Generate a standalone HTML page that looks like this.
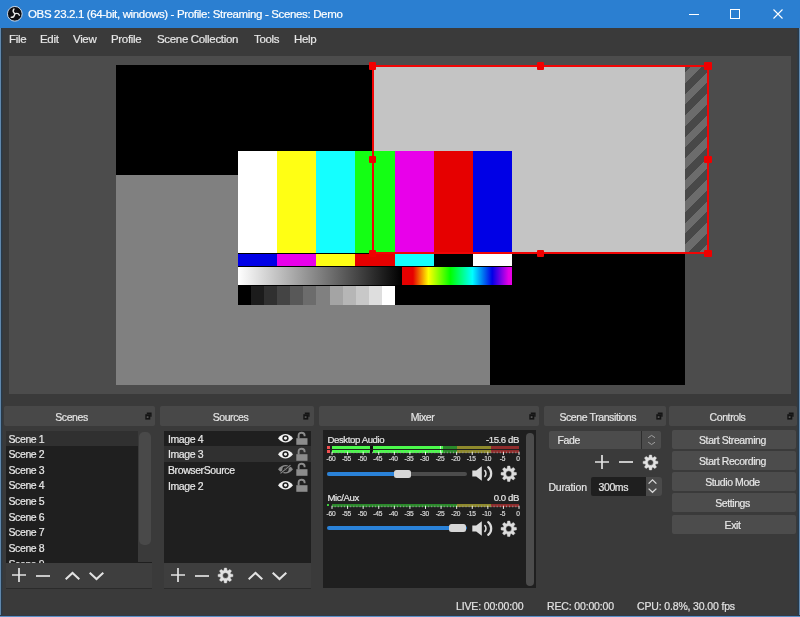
<!DOCTYPE html>
<html>
<head>
<meta charset="utf-8">
<title>OBS</title>
<style>
*{box-sizing:border-box;margin:0;padding:0}
html,body{width:800px;height:617px;overflow:hidden;background:#3a3a3a}
body{position:relative;font-family:"Liberation Sans",sans-serif;color:#e1e1e1;font-size:10.5px;letter-spacing:-0.4px}
.abs{position:absolute}
#win{position:absolute;left:0;top:0;width:800px;height:617px;background:#3a3a3a;overflow:hidden;will-change:transform;-webkit-text-stroke:0.2px currentColor}
#frameL{left:0;top:28px;width:2.6px;height:589px;background:linear-gradient(90deg,#6088ad 0,#6088ad 1px,#24384b 1px,#2a3a48 2px,#343a40 2.6px)}
#frameR{left:797.2px;top:28px;width:2.8px;height:589px;background:linear-gradient(270deg,#6088ad 0,#6088ad 1px,#24384b 1px,#2a3a48 2px,#343a40 2.8px)}
#frameB{left:0;top:615px;width:800px;height:2px;background:linear-gradient(0deg,#5b8fc7 0,#5b8fc7 1px,#2c3a4a 1px,#38393c 2px)}
#title{left:0;top:0;width:800px;height:28px;background:#2b7fd1}
#title .t{left:28px;top:0;height:28px;line-height:28px;font-size:11.5px;color:#fff;white-space:nowrap;letter-spacing:-0.35px}
#menu{left:1px;top:28px;width:798px;height:24px;background:#3a3a3a}
#menu span{position:absolute;top:0;height:22px;line-height:22px;font-size:11.5px;color:#e6e6e6;white-space:nowrap;letter-spacing:-0.33px}
#preview{left:9px;top:56px;width:782px;height:338.3px;background:#4c4c4c;overflow:hidden}
.dtitle{height:20px;top:406px;background:#484848;border-radius:2px;text-align:center;line-height:22px;font-size:10.5px;color:#e4e4e4;padding-right:16px}
.list{background:#1f1f1f}
.row{position:absolute;left:0;height:15.7px;line-height:17.3px;white-space:nowrap;font-size:10.5px;color:#e8e8e8}
.tb{background:#3e3e3e;border-bottom:1px solid #2b2b2b}
.btn{left:672px;width:124px;padding-right:3px;height:19px;background:#4c4c4c;border-radius:2px;text-align:center;line-height:20px;font-size:10.5px;color:#e6e6e6}
.st{top:599px;height:14px;line-height:14px;font-size:10.5px;color:#e1e1e1;white-space:nowrap;letter-spacing:-0.15px}
svg{position:absolute;overflow:visible}
.mt{font-size:9.6px;color:#e6e6e6;white-space:nowrap;height:13px;line-height:13px}
.ml{width:25px;text-align:center;font-size:6.6px;color:#d8d8d8;letter-spacing:-0.2px;height:8px;line-height:8px;white-space:nowrap;text-indent:-2px}
</style>
</head>
<body>
<div id="win">

<!-- title bar -->
<div id="title" class="abs">
  <svg style="left:7.3px;top:6.2px" width="15.6" height="15.6" viewBox="0 0 17 17">
    <circle cx="8.5" cy="8.5" r="8" fill="#0e0e12" stroke="#d8e6f6" stroke-width="1"/>
    <g fill="none" stroke="#e8e8e8" stroke-width="1.5" stroke-linecap="round">
      <path d="M8.2 8.2 C6.5 6.5 6.3 4.6 7.6 3.2"/>
      <path d="M8.8 8.4 C11 7.6 12.8 8.3 13.5 10"/>
      <path d="M8.4 9 C8 11.2 6.5 12.5 4.6 12.3"/>
    </g>
  </svg>
  <div class="abs t">OBS 23.2.1 (64-bit, windows) - Profile: Streaming - Scenes: Demo</div>
  <svg style="left:688px;top:8px" width="100" height="14" viewBox="0 0 100 14">
    <path d="M1 6.5 H11" stroke="#fff" stroke-width="1" fill="none"/>
    <rect x="42.5" y="1.5" width="9" height="9" stroke="#fff" stroke-width="1" fill="none"/>
    <path d="M85.5 1.5 L94.5 10.5 M94.5 1.5 L85.5 10.5" stroke="#fff" stroke-width="1.1" fill="none"/>
  </svg>
</div>

<!-- menu -->
<div id="menu" class="abs">
  <span style="left:8px">File</span>
  <span style="left:39px">Edit</span>
  <span style="left:72px">View</span>
  <span style="left:110px">Profile</span>
  <span style="left:156px">Scene Collection</span>
  <span style="left:253px">Tools</span>
  <span style="left:293px">Help</span>
</div>

<!-- preview -->
<div id="preview" class="abs">
  <!-- canvas: page coords (116,65)-(684,385) => local (107,9) -->
  <div class="abs" style="left:107px;top:9px;width:568.5px;height:320px;background:#000"></div>
  <div class="abs" style="left:107px;top:119px;width:373.5px;height:210px;background:#808080"></div>
  <!-- light gray image 3 -->
  <div class="abs" style="left:364px;top:10px;width:311.7px;height:187px;background:#c4c4c4"></div>
  <div class="abs" style="left:675.7px;top:10px;width:23.3px;height:187px;overflow:hidden"><div class="abs" style="left:0;top:-3.7px;width:30px;height:200px;background:repeating-linear-gradient(135deg,#484848 0,#484848 7.6px,#6c6c6c 7.6px,#6c6c6c 15.2px)"></div></div>
  <!-- colour bars: page (238,151)-(512,305) => local (229,95) -->
  <div id="bars" class="abs" style="left:229px;top:95px;width:274px;height:154px;background:#000">
    <div class="abs" style="left:0;top:0;width:274px;height:102px;background:linear-gradient(90deg,#fff 0,#fff 14.2857%,#ffff14 14.2857%,#ffff14 28.5714%,#14ffff 28.5714%,#14ffff 42.857%,#14ff14 42.857%,#14ff14 57.143%,#e800ea 57.143%,#e800ea 71.4286%,#e60000 71.4286%,#e60000 85.714%,#0000e6 85.714%,#0000e6 100%)"></div>
    <div class="abs" style="left:0;top:103.2px;width:274px;height:11.7px;background:linear-gradient(90deg,#0000e6 0,#0000e6 14.2857%,#e800ea 14.2857%,#e800ea 28.5714%,#ffff14 28.5714%,#ffff14 42.857%,#e60000 42.857%,#e60000 57.143%,#14ffff 57.143%,#14ffff 71.4286%,#000 71.4286%,#000 85.714%,#fff 85.714%,#fff 100%)"></div>
    <div class="abs" style="left:0;top:116.3px;width:164px;height:17.3px;background:linear-gradient(90deg,#fff,#000)"></div>
    <div class="abs" style="left:164px;top:116.3px;width:110px;height:17.3px;background:linear-gradient(90deg,#e60000 0,#e60000 10%,#ffff00 24%,#00ff00 44%,#00ffff 64%,#0000e6 82%,#e600e6 97%,#e600e6 100%)"></div>
    <div class="abs" style="left:0;top:134.8px;width:156.6px;height:19px;background:linear-gradient(90deg,#000000 0.000%,#000000 8.333%,#1c1c1c 8.333%,#1c1c1c 16.667%,#303030 16.667%,#303030 25.000%,#444444 25.000%,#444444 33.333%,#585858 33.333%,#585858 41.667%,#6c6c6c 41.667%,#6c6c6c 50.000%,#808080 50.000%,#808080 58.333%,#a4a4a4 58.333%,#a4a4a4 66.667%,#b6b6b6 66.667%,#b6b6b6 75.000%,#c8c8c8 75.000%,#c8c8c8 83.333%,#dedede 83.333%,#dedede 91.667%,#ffffff 91.667%,#ffffff 100.000%)"></div>
  </div>
  <!-- selection box -->
  <div class="abs" style="left:362.6px;top:9.0px;width:337.4px;height:189.3px;border:2px solid #f00505"></div>
  <div class="abs hd" style="left:359.85px;top:6.25px"></div>
  <div class="abs hd" style="left:359.85px;top:99.85px"></div>
  <div class="abs hd" style="left:359.85px;top:193.55px"></div>
  <div class="abs hd" style="left:527.55px;top:6.25px"></div>
  <div class="abs hd" style="left:527.55px;top:193.55px"></div>
  <div class="abs hd" style="left:695.25px;top:6.25px"></div>
  <div class="abs hd" style="left:695.25px;top:99.85px"></div>
  <div class="abs hd" style="left:695.25px;top:193.55px"></div>
</div>
<style>.hd{width:7.5px;height:7.5px;background:#f00000;border-radius:1px}</style>

<!-- DOCKS -->
<div class="abs dtitle" style="left:4px;width:151px">Scenes</div>
<svg style="left:144.8px;top:412.3px" width="7" height="8" viewBox="0 0 7 8"><path d="M1.8 0.4H6.6V4.8H5.2V2H1.8Z" fill="#141414"/><rect x="0.3" y="2.2" width="5" height="5.4" fill="#141414"/><rect x="1.7" y="4.3" width="1.8" height="1.6" fill="#5a5a5a"/></svg>
<div class="abs list" style="left:6px;top:430.5px;width:145.5px;height:132px;overflow:hidden">
<div class="abs" style="left:0;top:0;width:131.7px;height:15.2px;background:#303030"></div>
<div class="abs" style="left:132px;top:0;width:14px;height:131.5px;background:#3a3a3a"></div>
<div class="abs" style="left:133px;top:1.7px;width:11.5px;height:113px;background:#494949;border-radius:5px"></div>
<div class="row" style="left:2.5px;top:0.00px">Scene 1</div>
<div class="row" style="left:2.5px;top:15.65px">Scene 2</div>
<div class="row" style="left:2.5px;top:31.30px">Scene 3</div>
<div class="row" style="left:2.5px;top:46.95px">Scene 4</div>
<div class="row" style="left:2.5px;top:62.60px">Scene 5</div>
<div class="row" style="left:2.5px;top:78.25px">Scene 6</div>
<div class="row" style="left:2.5px;top:93.90px">Scene 7</div>
<div class="row" style="left:2.5px;top:109.55px">Scene 8</div>
<div class="row" style="left:2.5px;top:125.20px">Scene 9</div>
</div>
<div class="abs tb" style="left:6px;top:562.5px;width:145.5px;height:26px"></div>
<svg style="left:11.6px;top:568.4px" width="14" height="14" viewBox="0 0 14 14"><path d="M7 0V14M0 7H14" stroke="#e2e2e2" stroke-width="1.7" fill="none"/></svg><svg style="left:35.6px;top:568.6px" width="14" height="14" viewBox="0 0 14 14"><path d="M0 7H14" stroke="#e2e2e2" stroke-width="1.7" fill="none"/></svg><svg style="left:64.5px;top:571.6px" width="15" height="8" viewBox="0 0 15 8"><path d="M0.7 7.3L7.5 0.9L14.3 7.3" stroke="#e2e2e2" stroke-width="2" fill="none"/></svg><svg style="left:89px;top:571.8px" width="15" height="8" viewBox="0 0 15 8"><path d="M0.7 0.7L7.5 7.1L14.3 0.7" stroke="#e2e2e2" stroke-width="2" fill="none"/></svg>

<div class="abs dtitle" style="left:160px;width:154px;padding-right:13px">Sources</div>
<svg style="left:302.8px;top:412.3px" width="7" height="8" viewBox="0 0 7 8"><path d="M1.8 0.4H6.6V4.8H5.2V2H1.8Z" fill="#141414"/><rect x="0.3" y="2.2" width="5" height="5.4" fill="#141414"/><rect x="1.7" y="4.3" width="1.8" height="1.6" fill="#5a5a5a"/></svg>
<div class="abs list" style="left:164px;top:430.5px;width:147px;height:132px;overflow:hidden">
<div class="abs" style="left:0;top:15.7px;width:147px;height:15.7px;background:#303030"></div>
<div class="row" style="left:4px;top:0.00px">Image 4</div>
<svg style="left:113.7px;top:3.5px" width="15" height="8.5" viewBox="0 0 15 9" preserveAspectRatio="none"><path d="M0 4.5C2.5 1 5 0 7.5 0S12.5 1 15 4.5C12.5 8 10 9 7.5 9S2.5 8 0 4.5Z" fill="#f2f2f2"/><circle cx="7.5" cy="4.5" r="3.1" fill="#1f1f1f"/><circle cx="7.5" cy="4.5" r="1.5" fill="#f2f2f2"/></svg><svg style="left:132px;top:1.3px" width="12" height="13" viewBox="0 0 12 13"><rect x="0.3" y="6.2" width="11.2" height="6.6" fill="#8c8c8c"/><path d="M2.6 6.4V3.6C2.6 1.4 4.2 0.7 5.6 0.7S8.6 1.4 8.6 3.4V4.2" stroke="#8c8c8c" stroke-width="1.9" fill="none"/></svg>
<div class="row" style="left:4px;top:15.70px">Image 3</div>
<svg style="left:113.7px;top:19.2px" width="15" height="8.5" viewBox="0 0 15 9" preserveAspectRatio="none"><path d="M0 4.5C2.5 1 5 0 7.5 0S12.5 1 15 4.5C12.5 8 10 9 7.5 9S2.5 8 0 4.5Z" fill="#f2f2f2"/><circle cx="7.5" cy="4.5" r="3.1" fill="#1f1f1f"/><circle cx="7.5" cy="4.5" r="1.5" fill="#f2f2f2"/></svg><svg style="left:132px;top:17.0px" width="12" height="13" viewBox="0 0 12 13"><rect x="0.3" y="6.2" width="11.2" height="6.6" fill="#8c8c8c"/><path d="M2.6 6.4V3.6C2.6 1.4 4.2 0.7 5.6 0.7S8.6 1.4 8.6 3.4V4.2" stroke="#8c8c8c" stroke-width="1.9" fill="none"/></svg>
<div class="row" style="left:4px;top:31.40px">BrowserSource</div>
<svg style="left:113.7px;top:34.9px" width="15" height="8.5" viewBox="0 0 15 9" preserveAspectRatio="none"><path d="M0 4.5C2.5 1 5 0 7.5 0S12.5 1 15 4.5C12.5 8 10 9 7.5 9S2.5 8 0 4.5Z" fill="#8a8a8a"/><circle cx="7.5" cy="4.5" r="3.1" fill="#1f1f1f"/><circle cx="7.5" cy="4.5" r="1.5" fill="#8a8a8a"/><path d="M2.5 8.8L12.5 0.2" stroke="#1f1f1f" stroke-width="2.6"/><path d="M2.5 8.8L12.5 0.2" stroke="#8a8a8a" stroke-width="1.1"/></svg><svg style="left:132px;top:32.699999999999996px" width="12" height="13" viewBox="0 0 12 13"><rect x="0.3" y="6.2" width="11.2" height="6.6" fill="#8c8c8c"/><path d="M2.6 6.4V3.6C2.6 1.4 4.2 0.7 5.6 0.7S8.6 1.4 8.6 3.4V4.2" stroke="#8c8c8c" stroke-width="1.9" fill="none"/></svg>
<div class="row" style="left:4px;top:47.10px">Image 2</div>
<svg style="left:113.7px;top:50.599999999999994px" width="15" height="8.5" viewBox="0 0 15 9" preserveAspectRatio="none"><path d="M0 4.5C2.5 1 5 0 7.5 0S12.5 1 15 4.5C12.5 8 10 9 7.5 9S2.5 8 0 4.5Z" fill="#f2f2f2"/><circle cx="7.5" cy="4.5" r="3.1" fill="#1f1f1f"/><circle cx="7.5" cy="4.5" r="1.5" fill="#f2f2f2"/></svg><svg style="left:132px;top:48.39999999999999px" width="12" height="13" viewBox="0 0 12 13"><rect x="0.3" y="6.2" width="11.2" height="6.6" fill="#8c8c8c"/><path d="M2.6 6.4V3.6C2.6 1.4 4.2 0.7 5.6 0.7S8.6 1.4 8.6 3.4V4.2" stroke="#8c8c8c" stroke-width="1.9" fill="none"/></svg>
</div>
<div class="abs tb" style="left:164px;top:562.5px;width:147px;height:26px"></div>
<svg style="left:170.6px;top:568.4px" width="14" height="14" viewBox="0 0 14 14"><path d="M7 0V14M0 7H14" stroke="#e2e2e2" stroke-width="1.7" fill="none"/></svg><svg style="left:194.6px;top:568.6px" width="14" height="14" viewBox="0 0 14 14"><path d="M0 7H14" stroke="#e2e2e2" stroke-width="1.7" fill="none"/></svg><svg style="left:218px;top:568px" width="15" height="15" viewBox="-1 -1 2 2"><path d="M0.669 -0.207 L0.989 -0.149 L0.989 0.149 L0.669 0.207 L0.619 0.327 L0.805 0.593 L0.593 0.805 L0.327 0.619 L0.207 0.669 L0.149 0.989 L-0.149 0.989 L-0.207 0.669 L-0.327 0.619 L-0.593 0.805 L-0.805 0.593 L-0.619 0.327 L-0.669 0.207 L-0.989 0.149 L-0.989 -0.149 L-0.669 -0.207 L-0.619 -0.327 L-0.805 -0.593 L-0.593 -0.805 L-0.327 -0.619 L-0.207 -0.669 L-0.149 -0.989 L0.149 -0.989 L0.207 -0.669 L0.327 -0.619 L0.593 -0.805 L0.805 -0.593 L0.619 -0.327Z M0.38 0 A0.38 0.38 0 1 0 -0.38 0 A0.38 0.38 0 1 0 0.38 0Z" fill="#e2e2e2" fill-rule="evenodd" stroke-linejoin="round" stroke-width="0.06" stroke="currentColor"/></svg><svg style="left:247.5px;top:571.6px" width="15" height="8" viewBox="0 0 15 8"><path d="M0.7 7.3L7.5 0.9L14.3 7.3" stroke="#e2e2e2" stroke-width="2" fill="none"/></svg><svg style="left:272px;top:571.8px" width="15" height="8" viewBox="0 0 15 8"><path d="M0.7 0.7L7.5 7.1L14.3 0.7" stroke="#e2e2e2" stroke-width="2" fill="none"/></svg>

<div class="abs dtitle" style="left:319px;width:220px;padding-right:13px">Mixer</div>
<svg style="left:528.8px;top:412.3px" width="7" height="8" viewBox="0 0 7 8"><path d="M1.8 0.4H6.6V4.8H5.2V2H1.8Z" fill="#141414"/><rect x="0.3" y="2.2" width="5" height="5.4" fill="#141414"/><rect x="1.7" y="4.3" width="1.8" height="1.6" fill="#5a5a5a"/></svg>
<div class="abs list" style="left:322.5px;top:430px;width:213.5px;height:158px"></div>
<div class="abs" style="left:526px;top:432.5px;width:8px;height:153px;background:#4c4c4c;border-radius:4px"></div>
<div class="abs mt" style="left:327.5px;top:433px">Desktop Audio</div><div class="abs mt" style="right:281px;top:433px">-15.6 dB</div>
<div class="abs" style="left:332.0px;top:446px;width:187.0px;height:3px;background:linear-gradient(90deg,#2a8a2a 0,#2a8a2a 66.667%,#8f8a2c 66.667%,#8f8a2c 85.000%,#8f2c2c 85.000%,#8f2c2c 100%)"></div><div class="abs" style="left:332.0px;top:446px;width:110.6px;height:3px;background:#4cfa4c"></div><div class="abs" style="left:370.2px;top:446px;width:2.8px;height:3px;background:#101010"></div><div class="abs" style="left:440.1px;top:446px;width:1.2px;height:3px;background:#c8ffc8"></div><div class="abs" style="left:326.8px;top:446px;width:3px;height:3px;background:#f05050"></div>
<div class="abs" style="left:332.0px;top:450px;width:187.0px;height:3px;background:linear-gradient(90deg,#2a8a2a 0,#2a8a2a 66.667%,#8f8a2c 66.667%,#8f8a2c 85.000%,#8f2c2c 85.000%,#8f2c2c 100%)"></div><div class="abs" style="left:332.0px;top:450px;width:110.6px;height:3px;background:#4cfa4c"></div><div class="abs" style="left:370.2px;top:450px;width:2.8px;height:3px;background:#101010"></div><div class="abs" style="left:440.1px;top:450px;width:1.2px;height:3px;background:#c8ffc8"></div><div class="abs" style="left:326.8px;top:450px;width:3px;height:3px;background:#f05050"></div>
<svg style="left:0;top:0" width="800" height="617" viewBox="0 0 800 617"><path d="M335.12 451.7V453.3M338.23 451.7V453.3M341.35 451.7V453.3M344.47 451.7V453.3M350.70 451.7V453.3M353.82 451.7V453.3M356.93 451.7V453.3M360.05 451.7V453.3M366.28 451.7V453.3M369.40 451.7V453.3M372.52 451.7V453.3M375.63 451.7V453.3M381.87 451.7V453.3M384.98 451.7V453.3M388.10 451.7V453.3M391.22 451.7V453.3M397.45 451.7V453.3M400.57 451.7V453.3M403.68 451.7V453.3M406.80 451.7V453.3M413.03 451.7V453.3M416.15 451.7V453.3M419.27 451.7V453.3M422.38 451.7V453.3M428.62 451.7V453.3M431.73 451.7V453.3M434.85 451.7V453.3M437.97 451.7V453.3M444.20 451.7V453.3M447.32 451.7V453.3M450.43 451.7V453.3M453.55 451.7V453.3M459.78 451.7V453.3M462.90 451.7V453.3M466.02 451.7V453.3M469.13 451.7V453.3M475.37 451.7V453.3M478.48 451.7V453.3M481.60 451.7V453.3M484.72 451.7V453.3M490.95 451.7V453.3M494.07 451.7V453.3M497.18 451.7V453.3M500.30 451.7V453.3M506.53 451.7V453.3M509.65 451.7V453.3M512.77 451.7V453.3M515.88 451.7V453.3" stroke="#9a9a9a" stroke-width="0.9" fill="none"/><path d="M332.00 451.7V454.9M347.58 451.7V454.9M363.17 451.7V454.9M378.75 451.7V454.9M394.33 451.7V454.9M409.92 451.7V454.9M425.50 451.7V454.9M441.08 451.7V454.9M456.67 451.7V454.9M472.25 451.7V454.9M487.83 451.7V454.9M503.42 451.7V454.9M519.00 451.7V454.9" stroke="#f0f0f0" stroke-width="1" fill="none"/></svg><div class="abs ml" style="left:319.5px;top:454.5px">-60</div><div class="abs ml" style="left:335.1px;top:454.5px">-55</div><div class="abs ml" style="left:350.7px;top:454.5px">-50</div><div class="abs ml" style="left:366.2px;top:454.5px">-45</div><div class="abs ml" style="left:381.8px;top:454.5px">-40</div><div class="abs ml" style="left:397.4px;top:454.5px">-35</div><div class="abs ml" style="left:413.0px;top:454.5px">-30</div><div class="abs ml" style="left:428.6px;top:454.5px">-25</div><div class="abs ml" style="left:444.2px;top:454.5px">-20</div><div class="abs ml" style="left:459.8px;top:454.5px">-15</div><div class="abs ml" style="left:475.3px;top:454.5px">-10</div><div class="abs ml" style="left:490.9px;top:454.5px">-5</div><div class="abs ml" style="left:506.5px;top:454.5px">0</div>
<div class="abs" style="left:327px;top:471.8px;width:140px;height:4px;background:#4c4c4c;border-radius:2px"></div><div class="abs" style="left:327px;top:471.8px;width:70px;height:4px;background:#2a82d8;border-radius:2px"></div><div class="abs" style="left:394px;top:469.8px;width:17px;height:8px;background:#d6d6d6;border-radius:2.5px"></div>
<svg style="left:472px;top:466.3px" width="21" height="15" viewBox="0 0 21 15"><path d="M0.3 4.6H4.2L9.8 0.3V14.7L4.2 10.4H0.3Z" fill="#dcdcdc"/><path d="M12.9 4.6C14.3 6 14.3 9 12.9 10.4" stroke="#dcdcdc" stroke-width="1.6" fill="none" stroke-linecap="round"/><path d="M16.2 1.2C20.2 4.4 20.2 10.6 16.2 13.8" stroke="#dcdcdc" stroke-width="2.2" fill="none" stroke-linecap="round"/></svg><svg style="left:501.3px;top:465.8px" width="15.5" height="15.5" viewBox="-1 -1 2 2"><path d="M0.669 -0.207 L0.989 -0.149 L0.989 0.149 L0.669 0.207 L0.619 0.327 L0.805 0.593 L0.593 0.805 L0.327 0.619 L0.207 0.669 L0.149 0.989 L-0.149 0.989 L-0.207 0.669 L-0.327 0.619 L-0.593 0.805 L-0.805 0.593 L-0.619 0.327 L-0.669 0.207 L-0.989 0.149 L-0.989 -0.149 L-0.669 -0.207 L-0.619 -0.327 L-0.805 -0.593 L-0.593 -0.805 L-0.327 -0.619 L-0.207 -0.669 L-0.149 -0.989 L0.149 -0.989 L0.207 -0.669 L0.327 -0.619 L0.593 -0.805 L0.805 -0.593 L0.619 -0.327Z M0.38 0 A0.38 0.38 0 1 0 -0.38 0 A0.38 0.38 0 1 0 0.38 0Z" fill="#dcdcdc" fill-rule="evenodd" stroke-linejoin="round" stroke-width="0.06" stroke="currentColor"/></svg>
<div class="abs mt" style="left:327.5px;top:491.2px">Mic/Aux</div><div class="abs mt" style="right:281px;top:491.2px">0.0 dB</div>
<div class="abs" style="left:332.0px;top:504px;width:187.0px;height:3px;background:linear-gradient(90deg,#2a8a2a 0,#2a8a2a 66.667%,#8f8a2c 66.667%,#8f8a2c 85.000%,#8f2c2c 85.000%,#8f2c2c 100%)"></div><div class="abs" style="left:327px;top:504.3px;width:2px;height:2px;background:#3cc83c"></div>
<svg style="left:0;top:0" width="800" height="617" viewBox="0 0 800 617"><path d="M335.12 505.7V507.3M338.23 505.7V507.3M341.35 505.7V507.3M344.47 505.7V507.3M350.70 505.7V507.3M353.82 505.7V507.3M356.93 505.7V507.3M360.05 505.7V507.3M366.28 505.7V507.3M369.40 505.7V507.3M372.52 505.7V507.3M375.63 505.7V507.3M381.87 505.7V507.3M384.98 505.7V507.3M388.10 505.7V507.3M391.22 505.7V507.3M397.45 505.7V507.3M400.57 505.7V507.3M403.68 505.7V507.3M406.80 505.7V507.3M413.03 505.7V507.3M416.15 505.7V507.3M419.27 505.7V507.3M422.38 505.7V507.3M428.62 505.7V507.3M431.73 505.7V507.3M434.85 505.7V507.3M437.97 505.7V507.3M444.20 505.7V507.3M447.32 505.7V507.3M450.43 505.7V507.3M453.55 505.7V507.3M459.78 505.7V507.3M462.90 505.7V507.3M466.02 505.7V507.3M469.13 505.7V507.3M475.37 505.7V507.3M478.48 505.7V507.3M481.60 505.7V507.3M484.72 505.7V507.3M490.95 505.7V507.3M494.07 505.7V507.3M497.18 505.7V507.3M500.30 505.7V507.3M506.53 505.7V507.3M509.65 505.7V507.3M512.77 505.7V507.3M515.88 505.7V507.3" stroke="#9a9a9a" stroke-width="0.9" fill="none"/><path d="M332.00 505.7V508.9M347.58 505.7V508.9M363.17 505.7V508.9M378.75 505.7V508.9M394.33 505.7V508.9M409.92 505.7V508.9M425.50 505.7V508.9M441.08 505.7V508.9M456.67 505.7V508.9M472.25 505.7V508.9M487.83 505.7V508.9M503.42 505.7V508.9M519.00 505.7V508.9" stroke="#f0f0f0" stroke-width="1" fill="none"/></svg><div class="abs ml" style="left:319.5px;top:509.5px">-60</div><div class="abs ml" style="left:335.1px;top:509.5px">-55</div><div class="abs ml" style="left:350.7px;top:509.5px">-50</div><div class="abs ml" style="left:366.2px;top:509.5px">-45</div><div class="abs ml" style="left:381.8px;top:509.5px">-40</div><div class="abs ml" style="left:397.4px;top:509.5px">-35</div><div class="abs ml" style="left:413.0px;top:509.5px">-30</div><div class="abs ml" style="left:428.6px;top:509.5px">-25</div><div class="abs ml" style="left:444.2px;top:509.5px">-20</div><div class="abs ml" style="left:459.8px;top:509.5px">-15</div><div class="abs ml" style="left:475.3px;top:509.5px">-10</div><div class="abs ml" style="left:490.9px;top:509.5px">-5</div><div class="abs ml" style="left:506.5px;top:509.5px">0</div>
<div class="abs" style="left:327px;top:526.3px;width:140px;height:4px;background:#2a82d8;border-radius:2px"></div><div class="abs" style="left:449px;top:524.4px;width:17px;height:8px;background:#d6d6d6;border-radius:2.5px"></div>
<svg style="left:472px;top:521px" width="21" height="15" viewBox="0 0 21 15"><path d="M0.3 4.6H4.2L9.8 0.3V14.7L4.2 10.4H0.3Z" fill="#dcdcdc"/><path d="M12.9 4.6C14.3 6 14.3 9 12.9 10.4" stroke="#dcdcdc" stroke-width="1.6" fill="none" stroke-linecap="round"/><path d="M16.2 1.2C20.2 4.4 20.2 10.6 16.2 13.8" stroke="#dcdcdc" stroke-width="2.2" fill="none" stroke-linecap="round"/></svg><svg style="left:501.3px;top:520.5px" width="15.5" height="15.5" viewBox="-1 -1 2 2"><path d="M0.669 -0.207 L0.989 -0.149 L0.989 0.149 L0.669 0.207 L0.619 0.327 L0.805 0.593 L0.593 0.805 L0.327 0.619 L0.207 0.669 L0.149 0.989 L-0.149 0.989 L-0.207 0.669 L-0.327 0.619 L-0.593 0.805 L-0.805 0.593 L-0.619 0.327 L-0.669 0.207 L-0.989 0.149 L-0.989 -0.149 L-0.669 -0.207 L-0.619 -0.327 L-0.805 -0.593 L-0.593 -0.805 L-0.327 -0.619 L-0.207 -0.669 L-0.149 -0.989 L0.149 -0.989 L0.207 -0.669 L0.327 -0.619 L0.593 -0.805 L0.805 -0.593 L0.619 -0.327Z M0.38 0 A0.38 0.38 0 1 0 -0.38 0 A0.38 0.38 0 1 0 0.38 0Z" fill="#dcdcdc" fill-rule="evenodd" stroke-linejoin="round" stroke-width="0.06" stroke="currentColor"/></svg>

<div class="abs dtitle" style="left:543.5px;width:122.5px;padding-right:14px">Scene Transitions</div>
<svg style="left:655.8px;top:412.3px" width="7" height="8" viewBox="0 0 7 8"><path d="M1.8 0.4H6.6V4.8H5.2V2H1.8Z" fill="#141414"/><rect x="0.3" y="2.2" width="5" height="5.4" fill="#141414"/><rect x="1.7" y="4.3" width="1.8" height="1.6" fill="#5a5a5a"/></svg>
<div class="abs" style="left:549px;top:431px;width:111.5px;height:17.5px;background:#4c4c4c;border-radius:2px"></div><div class="abs" style="left:641.3px;top:431px;width:1px;height:17.5px;background:#2c2c2c"></div><div class="abs" style="left:557.5px;top:431px;height:17.5px;line-height:19.5px;font-size:10.5px;color:#e6e6e6">Fade</div><svg style="left:0;top:0" width="800" height="617" viewBox="0 0 800 617"><path d="M648.2 437.7L651.6 435.4L655 437.7M648.2 442.2L651.6 444.5L655 442.2" stroke="#a8a8a8" stroke-width="0.9" fill="none"/></svg>
<svg style="left:595.3px;top:455px" width="14" height="14" viewBox="0 0 14 14"><path d="M7 0V14M0 7H14" stroke="#e2e2e2" stroke-width="1.7" fill="none"/></svg><svg style="left:619.3px;top:455.2px" width="14" height="14" viewBox="0 0 14 14"><path d="M0 7H14" stroke="#e2e2e2" stroke-width="1.7" fill="none"/></svg><svg style="left:643px;top:455.2px" width="15" height="15" viewBox="-1 -1 2 2"><path d="M0.669 -0.207 L0.989 -0.149 L0.989 0.149 L0.669 0.207 L0.619 0.327 L0.805 0.593 L0.593 0.805 L0.327 0.619 L0.207 0.669 L0.149 0.989 L-0.149 0.989 L-0.207 0.669 L-0.327 0.619 L-0.593 0.805 L-0.805 0.593 L-0.619 0.327 L-0.669 0.207 L-0.989 0.149 L-0.989 -0.149 L-0.669 -0.207 L-0.619 -0.327 L-0.805 -0.593 L-0.593 -0.805 L-0.327 -0.619 L-0.207 -0.669 L-0.149 -0.989 L0.149 -0.989 L0.207 -0.669 L0.327 -0.619 L0.593 -0.805 L0.805 -0.593 L0.619 -0.327Z M0.38 0 A0.38 0.38 0 1 0 -0.38 0 A0.38 0.38 0 1 0 0.38 0Z" fill="#e2e2e2" fill-rule="evenodd" stroke-linejoin="round" stroke-width="0.06" stroke="currentColor"/></svg>
<div class="abs" style="left:548.4px;top:480.3px;height:14px;line-height:14px;font-size:10.5px;letter-spacing:-0.15px;color:#e6e6e6">Duration</div><div class="abs" style="left:590.5px;top:477.3px;width:56px;height:18.5px;background:#1f1f1f;border-radius:2px 0 0 2px"></div><div class="abs" style="left:646px;top:477.3px;width:16px;height:18.5px;background:#4a4a4a;border-radius:0 3px 3px 0"></div><div class="abs" style="left:598.5px;top:477.3px;height:18.5px;line-height:21.5px;font-size:10.5px;color:#e6e6e6">300ms</div><svg style="left:647.8px;top:478.9px" width="9" height="15" viewBox="0 0 9 15"><path d="M0.6 4.6L4.5 0.9L8.4 4.6M0.6 9.6L4.5 13.3L8.4 9.6" stroke="#d8d8d8" stroke-width="1.3" fill="none"/></svg>

<div class="abs dtitle" style="left:668.5px;width:128px;padding-right:10px">Controls</div>
<svg style="left:786.8px;top:412.3px" width="7" height="8" viewBox="0 0 7 8"><path d="M1.8 0.4H6.6V4.8H5.2V2H1.8Z" fill="#141414"/><rect x="0.3" y="2.2" width="5" height="5.4" fill="#141414"/><rect x="1.7" y="4.3" width="1.8" height="1.6" fill="#5a5a5a"/></svg>
<div class="abs btn" style="top:429.70px">Start Streaming</div>
<div class="abs btn" style="top:450.95px">Start Recording</div>
<div class="abs btn" style="top:472.20px">Studio Mode</div>
<div class="abs btn" style="top:493.45px">Settings</div>
<div class="abs btn" style="top:514.70px">Exit</div>

<div class="abs st" style="left:456px">LIVE: 00:00:00</div><div class="abs st" style="left:547px">REC: 00:00:00</div><div class="abs st" style="left:637px">CPU: 0.8%, 30.00 fps</div>


<div id="frameL" class="abs"></div>
<div id="frameR" class="abs"></div>
<div id="frameB" class="abs"></div>
</div>
</body>
</html>
